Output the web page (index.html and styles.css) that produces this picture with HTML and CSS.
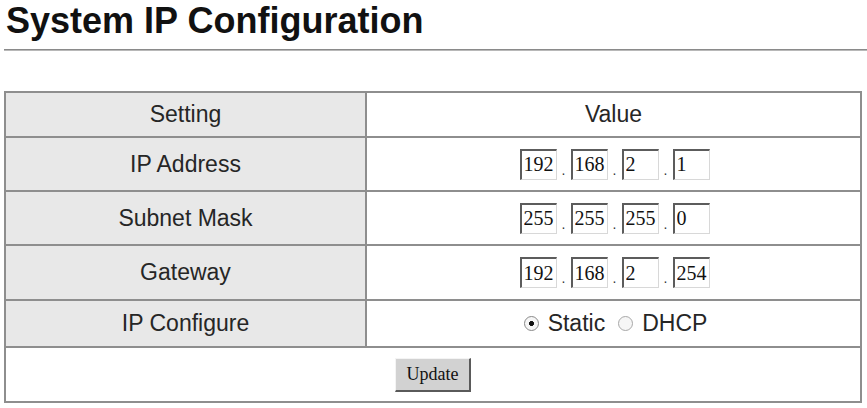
FILE: index.html
```html
<!DOCTYPE html>
<html>
<head>
<meta charset="utf-8">
<title>System IP Configuration</title>
<link rel="stylesheet" href="styles.css">
</head>
<body>
<div class="page">
  <h1 class="title">System IP Configuration</h1>
  <hr class="rule">
  <form class="form">
    <table class="cfg">
      <tr class="r-head">
        <td class="label">Setting</td>
        <td class="value">Value</td>
      </tr>
      <tr class="r-ip">
        <td class="label">IP Address</td>
        <td class="value">
          <div class="ip">
            <input class="oct" type="text" value="192"><span class="dot">.</span>
            <input class="oct" type="text" value="168"><span class="dot">.</span>
            <input class="oct" type="text" value="2"><span class="dot">.</span>
            <input class="oct" type="text" value="1">
          </div>
        </td>
      </tr>
      <tr class="r-ip">
        <td class="label">Subnet Mask</td>
        <td class="value">
          <div class="ip">
            <input class="oct" type="text" value="255"><span class="dot">.</span>
            <input class="oct" type="text" value="255"><span class="dot">.</span>
            <input class="oct" type="text" value="255"><span class="dot">.</span>
            <input class="oct" type="text" value="0">
          </div>
        </td>
      </tr>
      <tr class="r-ip2">
        <td class="label">Gateway</td>
        <td class="value">
          <div class="ip">
            <input class="oct" type="text" value="192"><span class="dot">.</span>
            <input class="oct" type="text" value="168"><span class="dot">.</span>
            <input class="oct" type="text" value="2"><span class="dot">.</span>
            <input class="oct" type="text" value="254">
          </div>
        </td>
      </tr>
      <tr class="r-radio">
        <td class="label">IP Configure</td>
        <td class="value">
          <div class="radios">
            <label class="opt"><input class="rad" type="radio" name="mode" checked>Static</label>
            <label class="opt"><input class="rad" type="radio" name="mode">DHCP</label>
          </div>
        </td>
      </tr>
      <tr class="r-btn">
        <td class="actions" colspan="2"><button class="btn" type="button">Update</button></td>
      </tr>
    </table>
  </form>
</div>
</body>
</html>
```
FILE: styles.css
```css
html, body {
  margin: 0;
  padding: 0;
  background: #ffffff;
}

.page {
  padding: 0 0 0 4px;
  font-family: "Liberation Sans", Arial, sans-serif;
}

.title {
  margin: 0 0 0 2px;
  font-size: 36px;
  line-height: 41px;
  font-weight: bold;
  color: #111111;
}

.rule {
  margin: 8px 0 0 0;
  height: 0;
  border: 0;
  border-top: 1px solid #8a8a8a;
  border-bottom: 1px solid #b8b8b8;
}

.form {
  margin: 40px 0 0 0;
}

.cfg {
  width: 858px;
  border-collapse: collapse;
  color: #262626;
  font-size: 23px;
}

.cfg td {
  border: 2px solid #8e8e8e;
  padding: 0;
  text-align: center;
  vertical-align: middle;
}

.cfg td.label {
  width: 359px;
  background: #e8e8e8;
}

.cfg td.value,
.cfg td.actions {
  background: #ffffff;
}

.r-head td { height: 43px; }
.r-ip td { height: 52px; }
.r-ip2 td { height: 53px; }
.r-radio td { height: 45px; }
.r-btn td { height: 53px; }

.ip {
  display: flex;
  justify-content: center;
  align-items: flex-end;
  margin-left: 2px;
}

.oct {
  box-sizing: border-box;
  width: 37px;
  height: 31px;
  margin: 0;
  padding: 0 0 0 2px;
  border-style: solid;
  border-width: 2px 1px 1px 2px;
  border-color: #5c5c5c #d8d8d8 #d8d8d8 #5c5c5c;
  background: #ffffff;
  font-family: "Liberation Serif", "Times New Roman", serif;
  font-size: 20px;
  color: #111111;
  outline: none;
}

.dot {
  width: 14px;
  text-align: center;
  font-size: 14px;
  line-height: 14px;
  padding-bottom: 3px;
  color: #333333;
}

.radios {
  display: flex;
  justify-content: center;
  align-items: center;
  gap: 13px;
  margin-left: 4px;
}

.opt {
  display: flex;
  align-items: center;
  gap: 9px;
}

.rad {
  appearance: none;
  -webkit-appearance: none;
  box-sizing: border-box;
  width: 15px;
  height: 15px;
  margin: 0;
  border-radius: 50%;
  border: 1px solid #a8a8a8;
  background: #f6f6f6;
}

.rad:checked {
  background: radial-gradient(circle, #111111 0 2.2px, #f6f6f6 2.8px);
  border-color: #8a8a8a;
}

.btn {
  box-sizing: border-box;
  width: 76px;
  height: 34px;
  margin: 0;
  padding: 0;
  border-style: solid;
  border-width: 1px 2px 2px 1px;
  border-color: #f4f4f4 #5a5a5a #5a5a5a #f4f4f4;
  background: #d2d2d2;
  font-family: "Liberation Serif", "Times New Roman", serif;
  font-size: 18px;
  color: #111111;
}
```
